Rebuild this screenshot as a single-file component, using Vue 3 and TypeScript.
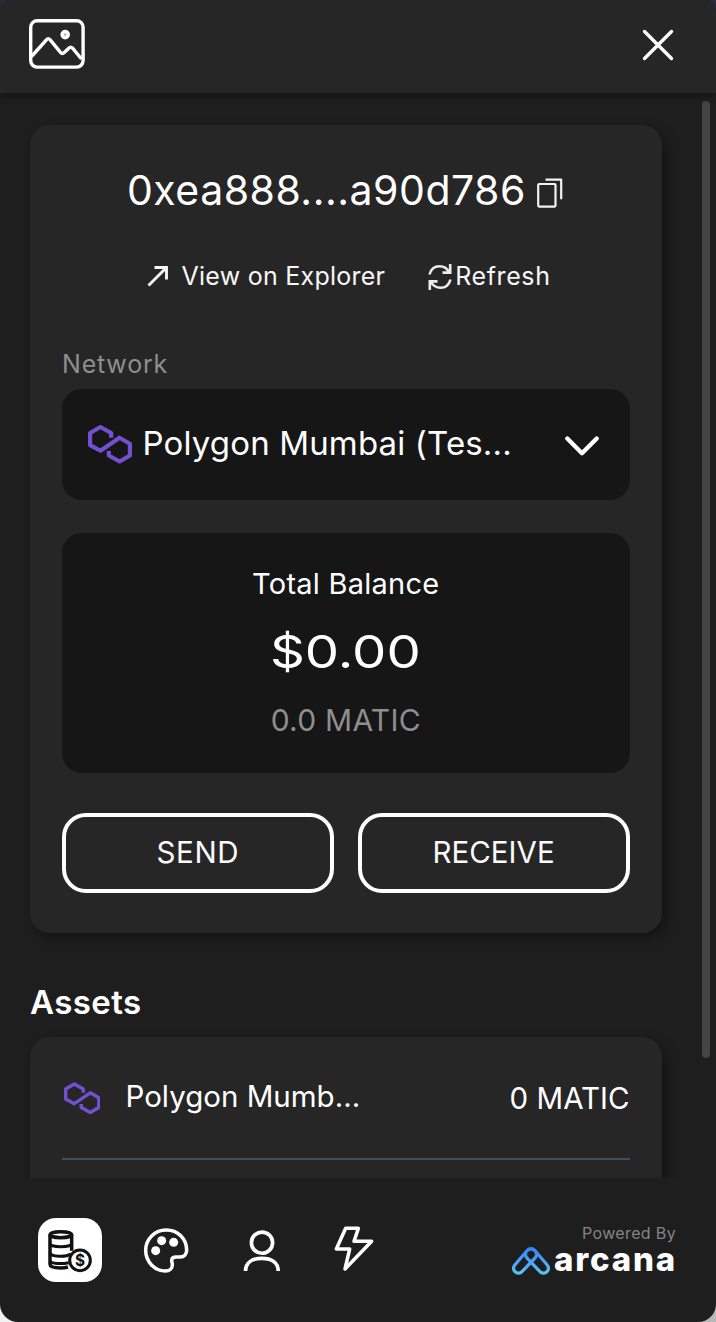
<script setup lang="ts">
import { ref } from 'vue'

interface Asset {
  name: string
  balance: string
}

type Tab = 'assets' | 'nfts' | 'profile' | 'activity'

const address = '0xea888....a90d786'
const network = 'Polygon Mumbai (Tes...'
const assets: Asset[] = [{ name: 'Polygon Mumb...', balance: '0 MATIC' }]
const activeTab = ref<Tab>('assets')
const polygonPath = 'M69 38V24L37 6L6 24V60L37 77L94 38L125 56V91L94 109L62 91V78'
</script>

<template>
  <div class="backdrop">
    <main class="wallet">
      <header class="header">
        <svg class="picture" viewBox="0 0 56 50" fill="none" stroke="#fff" stroke-width="3.4">
          <rect x="1.7" y="1.7" width="52.4" height="46.4" rx="6.5" />
          <path d="M2.5 37.5L17.6 20.6Q19.2 18.6 21 20.6L31.5 33.4Q33.3 35.4 35.2 33.6L39.8 29.2Q41.7 27.2 43.6 29.2L52.5 40" />
          <circle cx="36.2" cy="15.6" r="3.1" fill="#b5b5b5" />
        </svg>
        <svg class="close" viewBox="0 0 32 32" fill="none" stroke="#fff" stroke-width="3.4" stroke-linecap="round">
          <path d="M2.5 2.5L29.5 29.5M29.5 2.5L2.5 29.5" />
        </svg>
      </header>

      <div class="viewport">
        <div class="content">
          <section class="card">
            <div class="address">
              <span>{{ address }}</span>
              <svg class="copy" viewBox="0 0 26 30" fill="none" stroke="#f2f2f2" stroke-width="2.2" stroke-linejoin="round">
                <rect x="1.2" y="6" width="17.3" height="22.6" rx="1" />
                <path d="M8.5 1.7H24.2V21.3" />
              </svg>
            </div>
            <div class="links">
              <a class="link explorer">
                <svg class="arrow" viewBox="0 0 22 22" fill="none" stroke="#f5f5f5" stroke-width="2.9">
                  <path d="M1.5 20.5L19.5 2.5M7.5 2.5H19.5V14.5" />
                </svg>
                <span>View on Explorer</span>
              </a>
              <a class="link refresh">
                <svg class="cycle" viewBox="0 0 24 28" fill="none" stroke="#ececec" stroke-width="2.6">
                  <path d="M1.5 11.5C3 6 7 3.2 11.5 3.2C15.5 3.2 19 5.2 21 9M22.2 1V9.6H14.5" />
                  <path d="M22.5 16.5C21 22 17 24.8 12.5 24.8C8.5 24.8 5 22.8 3 19M1.8 27V18.4H9.5" />
                </svg>
                <span>Refresh</span>
              </a>
            </div>

            <label class="label">Network</label>
            <div class="select">
              <svg class="token large" viewBox="0 0 131 115" fill="none" stroke="#7350d0" stroke-width="12.5" stroke-linejoin="round">
                <path :d="polygonPath" />
              </svg>
              <span class="network">{{ network }}</span>
              <svg class="chevron" viewBox="0 0 34 20" fill="none" stroke="#fff" stroke-width="4.3" stroke-linecap="round" stroke-linejoin="round">
                <path d="M2.3 2.5L17 17.3L31.7 2.5" />
              </svg>
            </div>

            <div class="balance">
              <div class="caption">Total Balance</div>
              <div class="fiat"><span>$0.00</span></div>
              <div class="native">0.0 MATIC</div>
            </div>

            <div class="actions">
              <button class="action send">SEND</button>
              <button class="action">RECEIVE</button>
            </div>
          </section>

          <h2 class="heading">Assets</h2>
          <section class="assets">
            <div v-for="asset in assets" :key="asset.name" class="asset">
              <svg class="token small" viewBox="0 0 131 115" fill="none" stroke="#7350d0" stroke-width="12.5" stroke-linejoin="round">
                <path :d="polygonPath" />
              </svg>
              <span class="asset-name">{{ asset.name }}</span>
              <span class="asset-balance">{{ asset.balance }}</span>
            </div>
          </section>
        </div>
        <div class="scrollbar"></div>
      </div>

      <footer class="footer">
        <nav class="tabs">
          <a class="tab" :class="{ active: activeTab === 'assets' }" @click="activeTab = 'assets'">
            <svg viewBox="0 0 192 192" fill="none" stroke="#111" stroke-width="10.5">
              <path d="M36 50V139C36 147 51 150 68 150C76 150 84 149 90 147M101 50V98" />
              <ellipse cx="68.5" cy="50" rx="32.5" ry="9" />
              <path d="M36 77C38 89 99 89 101 77M36 104C38 117 84 118 98 108M36 130C40 137 70 139 92 134" stroke-width="9" />
              <circle cx="126" cy="127" r="31" stroke-width="9" />
              <text x="126" y="144" class="coin">$</text>
            </svg>
          </a>
          <a class="tab" :class="{ active: activeTab === 'nfts' }" @click="activeTab = 'nfts'">
            <svg viewBox="0 0 192 192" fill="none" stroke="#fff" stroke-width="10.5" stroke-linejoin="round">
              <path d="M97 36C62 36 35 63 35 97C35 131 62 159 94 159C107 159 115 151 115 140C115 134 113 132 113 128C113 121 119 117 127 117H139C151 117 158 108 158 97C158 62 131 36 97 36Z" />
              <g fill="#fff" stroke="none">
                <circle cx="65" cy="98" r="13.5" />
                <circle cx="83" cy="68" r="13.5" />
                <circle cx="119" cy="73" r="13.5" />
              </g>
            </svg>
          </a>
          <a class="tab" :class="{ active: activeTab === 'profile' }" @click="activeTab = 'profile'">
            <svg viewBox="0 0 192 192" fill="none" stroke="#fff" stroke-width="11">
              <circle cx="96" cy="74" r="31.8" />
              <path d="M46.5 159C46.5 133 68 121 96 121C124 121 144.5 133 144.5 159" />
            </svg>
          </a>
          <a class="tab" :class="{ active: activeTab === 'activity' }" @click="activeTab = 'activity'">
            <svg viewBox="0 0 192 192" fill="none" stroke="#fff" stroke-width="10.5" stroke-linejoin="round">
              <path d="M59 31H97L84 70H137L57 153L71 93H31Z" />
            </svg>
          </a>
        </nav>
        <div class="brand">
          <div class="powered">Powered By</div>
          <div class="logo">
            <svg class="mark" viewBox="0 0 114 84" fill="none" stroke="url(#mark-fill)" stroke-width="9.5">
              <defs>
                <linearGradient id="mark-fill" gradientUnits="userSpaceOnUse" x1="0" y1="0" x2="0" y2="84">
                  <stop offset="0" stop-color="#3b7df6" />
                  <stop offset="1" stop-color="#56c8f5" />
                </linearGradient>
              </defs>
              <path d="M44 12L9 53C-3 68 14 86 30 74L70 32C82 14 58 -4 44 12Z" />
              <path d="M70 12L105 53C117 68 100 86 84 74L44 32C32 14 56 -4 70 12Z" />
            </svg>
            <span class="wordmark">arcana</span>
          </div>
        </div>
      </footer>
    </main>
  </div>
</template>

<style>
body {
  margin: 0;
}
</style>

<style scoped>
.backdrop {
  width: 716px;
  height: 1322px;
  overflow: hidden;
  background: linear-gradient(90deg, #f2f2f2, #b8b8b8) bottom / 100% 50% no-repeat, #292b3d;
}

.wallet {
  box-sizing: border-box;
  display: flex;
  flex-direction: column;
  height: 1322px;
  overflow: hidden;
  border-radius: 12px 12px 18px 18px;
  background: #1e1e1e;
  color: #fff;
  font-family: Inter, "Liberation Sans", sans-serif;
}

.header {
  z-index: 1;
  flex: none;
  box-sizing: border-box;
  display: flex;
  align-items: center;
  justify-content: space-between;
  height: 93px;
  padding: 0 42px 5px 29px;
  background: #262626;
  box-shadow: 0 2px 8px rgba(0, 0, 0, 0.4);
}

.picture {
  width: 56px;
  height: 50px;
}

.close {
  width: 32px;
  height: 32px;
  margin-top: 2px;
}

.viewport {
  flex: none;
  display: flex;
  justify-content: space-between;
  height: 1085px;
  overflow: hidden;
}

.content {
  flex: none;
  width: 631.5px;
  padding: 32px 0 0 30px;
}

.scrollbar {
  width: 8.5px;
  height: 957px;
  margin: 8px 6px 0 0;
  border-radius: 4px;
  background: #444;
}

.card {
  box-sizing: border-box;
  height: 807.5px;
  padding: 32px 32px 40px;
  border-radius: 20px;
  background: #262626;
  box-shadow: 5px 5px 12px rgba(0, 0, 0, 0.35);
}

.address {
  display: flex;
  align-items: center;
  height: 66px;
  padding-left: 65px;
  font-size: 41px;
  line-height: 66px;
  letter-spacing: 0.5px;
}

.copy {
  width: 26px;
  height: 30px;
  margin: 6px 0 0 11px;
}

.links {
  display: flex;
  height: 50px;
  margin-top: 28px;
  padding-left: 85px;
  gap: 43px;
  font-size: 25px;
  line-height: 50px;
  color: #f7f7f7;
}

.link {
  display: flex;
  align-items: center;
  white-space: nowrap;
}

.explorer {
  gap: 12.5px;
  letter-spacing: 0.25px;
}

.refresh {
  gap: 3px;
  letter-spacing: 0.6px;
}

.arrow {
  width: 22px;
  height: 22px;
}

.cycle {
  width: 24px;
  height: 28px;
  margin-top: 2px;
}

.label {
  display: block;
  margin-top: 48px;
  font-size: 25px;
  line-height: 30px;
  letter-spacing: 0.8px;
  color: #8e8e8e;
}

.select {
  box-sizing: border-box;
  display: flex;
  align-items: center;
  height: 111px;
  margin-top: 10px;
  padding: 0 30.5px 0 26px;
  border-radius: 20px;
  background: #161616;
}

.token {
  flex: none;
}

.large {
  width: 44px;
  height: 38.5px;
}

.network {
  flex: 1;
  margin: -3px 0 0 10.5px;
  font-size: 33px;
  letter-spacing: 0.15px;
  white-space: nowrap;
}

.chevron {
  width: 34px;
  height: 20px;
  margin-top: 2px;
}

.balance {
  box-sizing: border-box;
  height: 239.5px;
  margin-top: 33px;
  padding-top: 32px;
  border-radius: 20px;
  background: #161616;
  text-align: center;
}

.caption {
  font-size: 29px;
  line-height: 38px;
  letter-spacing: 0.25px;
}

.fiat {
  margin: 19px 0;
  font-size: 45px;
  line-height: 60px;
}

.fiat span {
  display: inline-block;
  transform: scaleX(1.21);
}

.native {
  font-size: 30px;
  line-height: 38px;
  letter-spacing: 0.25px;
  color: #8e8e8e;
}

.actions {
  display: flex;
  gap: 24px;
  margin-top: 40.5px;
}

.action {
  flex: 1;
  box-sizing: border-box;
  height: 80px;
  padding: 0 0 2px;
  border: 4px solid #fff;
  border-radius: 24px;
  background: transparent;
  color: #fafafa;
  font-family: inherit;
  font-size: 29.5px;
  line-height: 70px;
}

.send {
  letter-spacing: 0.6px;
}

.heading {
  margin: 47px 0 13.5px;
  font-size: 33px;
  font-weight: 600;
  line-height: 44px;
  letter-spacing: 0.4px;
}

.assets {
  height: 240px;
  padding: 0 32px;
  border-radius: 20px;
  background: #262626;
  box-shadow: 5px 5px 12px rgba(0, 0, 0, 0.35);
}

.asset {
  display: flex;
  align-items: center;
  height: 121px;
  border-bottom: 2px solid #444b59;
  font-size: 29.5px;
}

.small {
  width: 36.5px;
  height: 32.5px;
  margin: 2px 25.5px 0 1.5px;
}

.asset-name {
  flex: 1;
  margin-top: -3px;
}

.footer {
  flex: none;
  box-sizing: border-box;
  display: flex;
  align-items: center;
  justify-content: space-between;
  height: 144px;
  padding: 0 40px 0 38px;
}

.tabs {
  display: flex;
  gap: 32px;
}

.tab {
  width: 64px;
  height: 64px;
  border-radius: 18px;
}

.tab svg {
  display: block;
  width: 64px;
  height: 64px;
}

.active {
  background: #fff;
}

.coin {
  fill: #111;
  stroke: none;
  font-size: 46px;
  font-weight: 700;
  text-anchor: middle;
}

.brand {
  margin-bottom: 3px;
}

.powered {
  font-size: 16px;
  line-height: 20px;
  letter-spacing: 0.35px;
  text-align: right;
  color: #858585;
}

.logo {
  display: flex;
  align-items: center;
  justify-content: flex-end;
  gap: 4px;
  margin-right: -1px;
}

.mark {
  width: 38px;
  height: 28px;
  margin-top: 4px;
}

.wordmark {
  font-size: 33px;
  font-weight: 800;
  line-height: 30px;
  letter-spacing: 1.8px;
}
</style>
